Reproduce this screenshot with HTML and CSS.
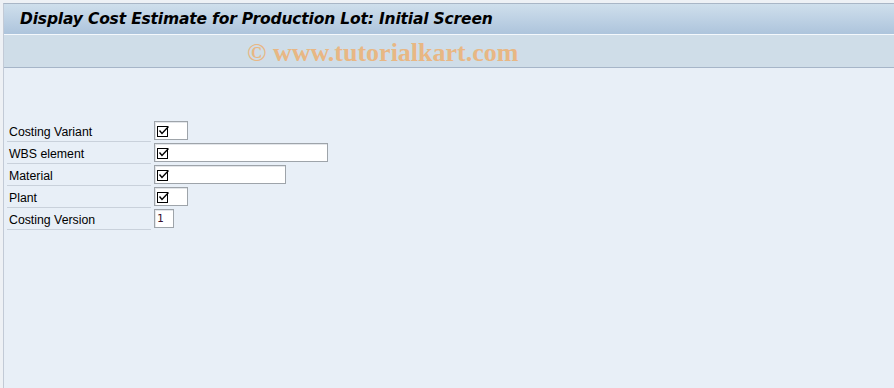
FILE: index.html
```html
<!DOCTYPE html>
<html lang="en">
<head>
  <meta charset="UTF-8">
  <title>Display Cost Estimate for Production Lot: Initial Screen</title>
  <link rel="stylesheet" href="styles.css">
</head>
<body>
  <div class="window">
    <div class="title-bar">
      <h1>Display Cost Estimate for Production Lot: Initial Screen</h1>
    </div>
    <div class="toolbar">
      <span class="watermark">&copy; www.tutorialkart.com</span>
    </div>

    <div class="content">
      <div class="form">
        <div class="form-row">
          <label class="field-label">Costing Variant</label>
          <div class="field w-4">
            <svg class="req" width="12" height="12" viewBox="0 0 12 12"><rect x="0.5" y="1.5" width="10" height="10" fill="none" stroke="#000"/><path d="M2.5 5.5 L5 8.5 L11.5 1.5" fill="none" stroke="#000" stroke-width="1.4"/></svg>
          </div>
        </div>
        <div class="form-row">
          <label class="field-label">WBS element</label>
          <div class="field w-24">
            <svg class="req" width="12" height="12" viewBox="0 0 12 12"><rect x="0.5" y="1.5" width="10" height="10" fill="none" stroke="#000"/><path d="M2.5 5.5 L5 8.5 L11.5 1.5" fill="none" stroke="#000" stroke-width="1.4"/></svg>
          </div>
        </div>
        <div class="form-row">
          <label class="field-label">Material</label>
          <div class="field w-18">
            <svg class="req" width="12" height="12" viewBox="0 0 12 12"><rect x="0.5" y="1.5" width="10" height="10" fill="none" stroke="#000"/><path d="M2.5 5.5 L5 8.5 L11.5 1.5" fill="none" stroke="#000" stroke-width="1.4"/></svg>
          </div>
        </div>
        <div class="form-row">
          <label class="field-label">Plant</label>
          <div class="field w-4">
            <svg class="req" width="12" height="12" viewBox="0 0 12 12"><rect x="0.5" y="1.5" width="10" height="10" fill="none" stroke="#000"/><path d="M2.5 5.5 L5 8.5 L11.5 1.5" fill="none" stroke="#000" stroke-width="1.4"/></svg>
          </div>
        </div>
        <div class="form-row">
          <label class="field-label">Costing Version</label>
          <div class="field w-2">1</div>
        </div>
      </div>
    </div>
  </div>
</body>
</html>
```

FILE: styles.css
```css
* {
  box-sizing: border-box;
  margin: 0;
  padding: 0;
}

html,
body {
  height: 100%;
}

body {
  font-family: "Liberation Sans", Arial, sans-serif;
  font-size: 12px;
  color: #000;
  background-color: #eef1f5;
  padding: 3px 0 0 3px;
  overflow: hidden;
}

.window {
  height: 100%;
  display: flex;
  flex-direction: column;
  border-top: 1px solid #a9b6c6;
  border-left: 1px solid #c2cad6;
  background-color: #e8eff7;
}

.title-bar {
  height: 31px;
  display: flex;
  align-items: center;
  padding-left: 16px;
  background: linear-gradient(#cfdfec, #adc4dc);
  border-bottom: 1px solid #f4f8fc;
}

.title-bar h1 {
  font-family: "DejaVu Sans", Verdana, sans-serif;
  font-size: 15.5px;
  font-weight: bold;
  font-style: italic;
  color: #000;
  letter-spacing: -0.17px;
}

.toolbar {
  height: 33px;
  display: flex;
  align-items: center;
  padding: 3px 0 0 243px;
  background-color: #cfdde8;
  border-bottom: 1px solid #a6b5c8;
}

.watermark {
  font-family: "Liberation Serif", "Times New Roman", serif;
  font-size: 26px;
  font-weight: bold;
  color: #e8b784;
}

.content {
  flex: 1;
  padding: 52px 0 0 3px;
}

.form-row {
  display: flex;
  align-items: center;
  height: 22px;
}

.field-label {
  width: 144px;
  height: 22px;
  line-height: 24px;
  padding-left: 2px;
  border-bottom: 1px solid #c9d1db;
  margin-right: 3px;
  font-size: 12.3px;
}

.field {
  height: 19px;
  margin-bottom: 1px;
  background-color: #fff;
  border: 1px solid #9ea4aa;
  box-shadow: inset 1px 1px 0 #e3e6ea;
  padding: 0 0 0 2px;
  display: flex;
  align-items: center;
  font-family: "DejaVu Sans Mono", monospace;
  font-size: 11px;
  color: #3a1030;
}

.req {
  display: block;
}

.w-2 { width: 20px; }
.w-4 { width: 34px; }
.w-18 { width: 132px; }
.w-24 { width: 174px; }
```
